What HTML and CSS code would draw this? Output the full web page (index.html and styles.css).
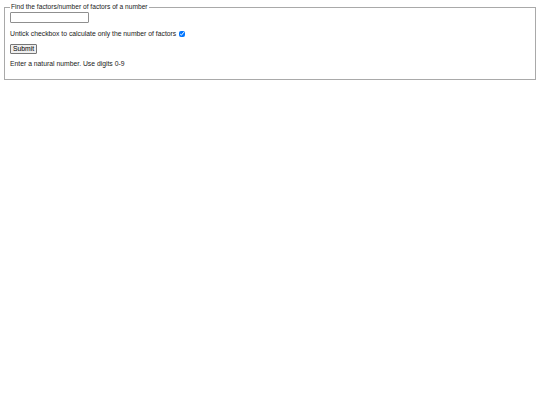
FILE: index.html
```html
<!DOCTYPE html>
<html>
<head>
<meta charset="utf-8">
<link rel="stylesheet" href="styles.css">
</head>
<body>
<form class="form">
<fieldset class="box">
<legend class="legend">Find the factors/number of factors of a number</legend>
<input class="num" type="text">
<div class="row">
<span>Untick checkbox to calculate only the number of factors</span>
<input class="check" type="checkbox" checked>
</div>
<div class="btnrow"><button class="btn" type="button">Submit</button></div>
<p class="msg">Enter a natural number. Use digits 0-9</p>
</fieldset>
</form>
</body>
</html>
```
FILE: styles.css
```css
html, body {
  margin: 0;
  background: #fff;
}
body {
  padding: 3px 4px;
  font-family: "Liberation Sans", Arial, sans-serif;
  font-size: 6.8px;
  line-height: 8px;
  color: #1a1a1a;
}
.form {
  margin: 0;
}
.box {
  margin: 0;
  border: 1px solid #a9a9a9;
  padding: 1px 5px 11px;
  display: flex;
  flex-direction: column;
  align-items: flex-start;
}
.legend {
  padding: 0 1px;
  line-height: 8px;
  font-size: 6.65px;
}
.num {
  box-sizing: border-box;
  width: 79px;
  height: 11px;
  margin: 0;
  padding: 0 2px;
  border: 1px solid #8f8f8f;
  border-radius: 1px;
  font: inherit;
}
.row {
  display: flex;
  align-items: center;
  margin-top: 7px;
  height: 8px;
}
.check {
  width: 6px;
  height: 6px;
  margin: 0 0 0 3px;
  accent-color: #0075ff;
}
.btnrow {
  margin-top: 6px;
  display: flex;
}
.btn {
  box-sizing: border-box;
  height: 10px;
  margin: 0;
  padding: 0 2px;
  border: 1px solid #767676;
  border-radius: 1px;
  background: #efefef;
  font: inherit;
  line-height: 8px;
  color: #000;
}
.msg {
  margin: 6px 0 0;
}
```
